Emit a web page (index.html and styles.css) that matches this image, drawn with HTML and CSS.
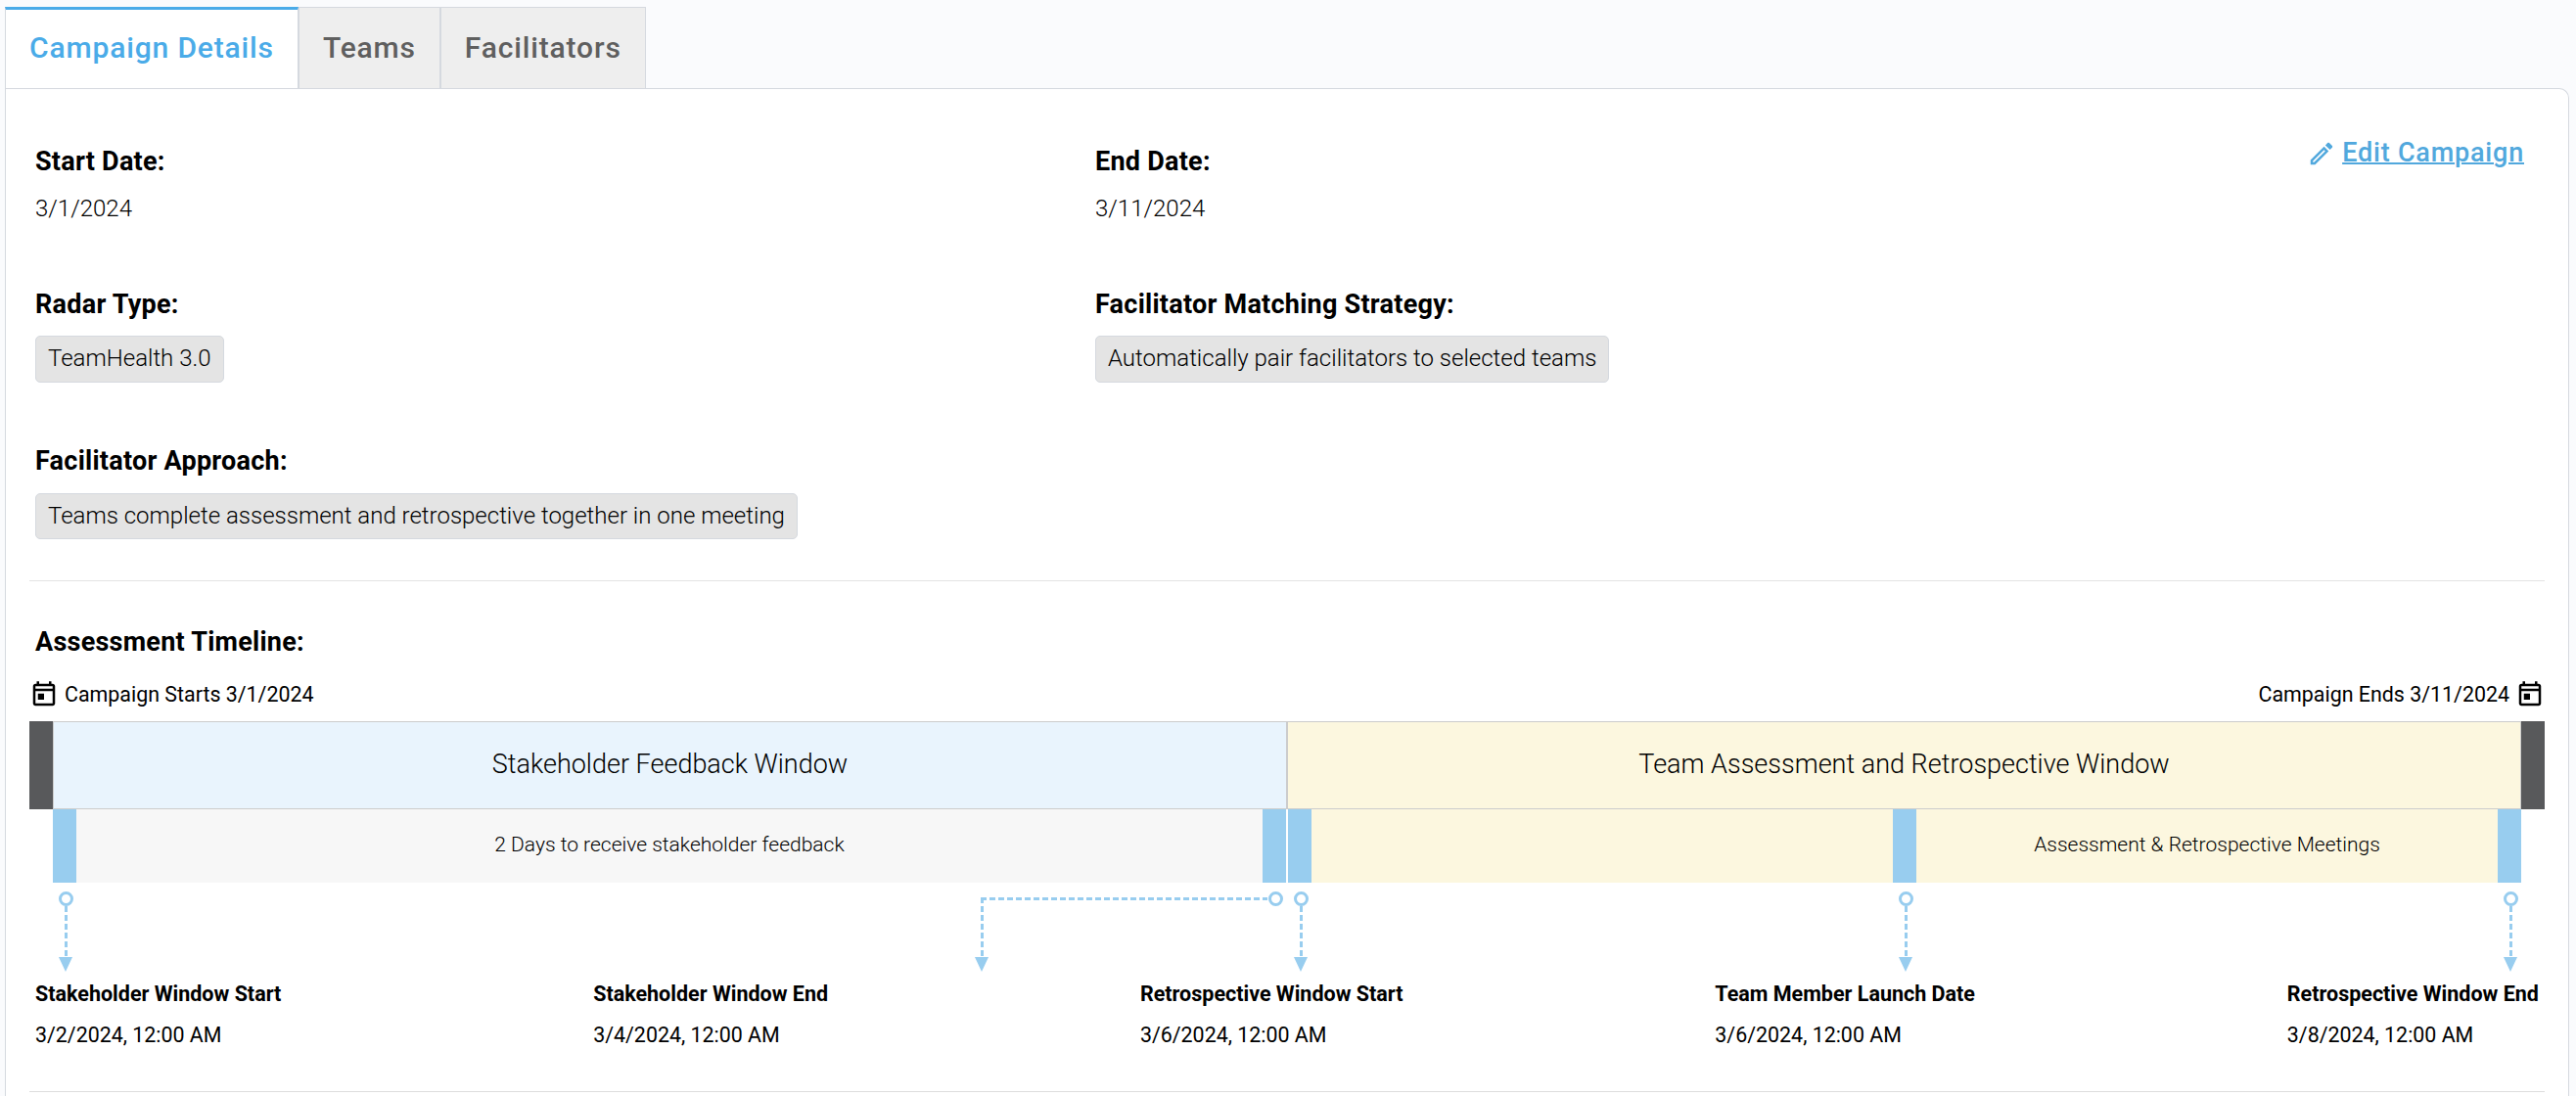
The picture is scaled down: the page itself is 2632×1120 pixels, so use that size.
FILE: index.html
```html
<!DOCTYPE html>
<html lang="en">
<head>
    <meta charset="UTF-8">
    <meta name="viewport" content="width=device-width, initial-scale=1.0">
    <title>Campaign Details</title>
    <link rel="stylesheet" href="styles.css">
</head>
<body>
    <nav class="tabs">
        <a class="tab active">Campaign Details</a>
        <a class="tab">Teams</a>
        <a class="tab">Facilitators</a>
    </nav>
    <main class="panel">
        <section class="details">
            <div class="field">
                <h3>Start Date:</h3>
                <p>3/1/2024</p>
            </div>
            <div class="field">
                <h3>End Date:</h3>
                <p>3/11/2024</p>
            </div>
            <a class="edit-link">
                <svg viewBox="0 0 24 24"><path d="M14.06 9.02l.92.92L5.92 19H5v-.92l9.06-9.06M17.66 3c-.25 0-.51.1-.7.29l-1.83 1.83 3.75 3.75 1.83-1.83c.39-.39.39-1.02 0-1.41l-2.34-2.34c-.2-.2-.45-.29-.71-.29zm-3.6 3.19L3 17.25V21h3.75L17.81 9.94l-3.75-3.75z"/></svg>
                <span>Edit Campaign</span>
            </a>
            <div class="field">
                <h3>Radar Type:</h3>
                <div class="chip">TeamHealth 3.0</div>
            </div>
            <div class="field wide">
                <h3>Facilitator Matching Strategy:</h3>
                <div class="chip">Automatically pair facilitators to selected teams</div>
            </div>
            <div class="field">
                <h3>Facilitator Approach:</h3>
                <div class="chip">Teams complete assessment and retrospective together in one meeting</div>
            </div>
        </section>

        <section class="timeline">
            <h3>Assessment Timeline:</h3>
            <div class="range">
                <div class="range-end">
                    <svg viewBox="0 0 24 24"><path d="M19 3h-1V1h-2v2H8V1H6v2H5c-1.11 0-1.99.9-1.99 2L3 19c0 1.1.89 2 2 2h14c1.1 0 2-.9 2-2V5c0-1.1-.9-2-2-2zm0 16H5V9h14v10zm0-12H5V5h14v2zM7 11h5v5H7z"/></svg>
                    <span>Campaign Starts 3/1/2024</span>
                </div>
                <div class="range-end">
                    <span>Campaign Ends 3/11/2024</span>
                    <svg viewBox="0 0 24 24"><path d="M19 3h-1V1h-2v2H8V1H6v2H5c-1.11 0-1.99.9-1.99 2L3 19c0 1.1.89 2 2 2h14c1.1 0 2-.9 2-2V5c0-1.1-.9-2-2-2zm0 16H5V9h14v10zm0-12H5V5h14v2zM7 11h5v5H7z"/></svg>
                </div>
            </div>
            <div class="windows">
                <div class="cap"></div>
                <div class="window stakeholder">Stakeholder Feedback Window</div>
                <div class="window team">Team Assessment and Retrospective Window</div>
                <div class="cap"></div>
            </div>
            <div class="phases">
                <div class="phase">
                    <i class="mark"></i>
                    <div class="span feedback">2 Days to receive stakeholder feedback</div>
                    <i class="mark"></i>
                </div>
                <div class="phase">
                    <i class="mark"></i>
                    <div class="span retro"></div>
                    <i class="mark"></i>
                    <div class="span retro">Assessment &amp; Retrospective Meetings</div>
                    <i class="mark"></i>
                </div>
            </div>
            <svg class="arrows" viewBox="0 0 2570 91">
                <g class="lines">
                    <path d="M37.5 24V75"/>
                    <path d="M973.5 24V75"/>
                    <path d="M972 16.5H1265"/>
                    <path d="M1299.5 24V75"/>
                    <path d="M1917.5 24V75"/>
                    <path d="M2535.5 24V75"/>
                </g>
                <path class="corner" d="M973.5 15V21"/>
                <g class="dots">
                    <circle cx="37.5" cy="16.5" r="6"/>
                    <circle cx="1273.5" cy="16.5" r="6"/>
                    <circle cx="1299.5" cy="16.5" r="6"/>
                    <circle cx="1917.5" cy="16.5" r="6"/>
                    <circle cx="2535.5" cy="16.5" r="6"/>
                </g>
                <g class="heads">
                    <path d="M30 76H44L37 91Z"/>
                    <path d="M966 76H980L973 91Z"/>
                    <path d="M1292 76H1306L1299 91Z"/>
                    <path d="M1910 76H1924L1917 91Z"/>
                    <path d="M2528 76H2542L2535 91Z"/>
                </g>
            </svg>
            <div class="dates">
                <div><strong>Stakeholder Window Start</strong><span>3/2/2024, 12:00 AM</span></div>
                <div><strong>Stakeholder Window End</strong><span>3/4/2024, 12:00 AM</span></div>
                <div><strong>Retrospective Window Start</strong><span>3/6/2024, 12:00 AM</span></div>
                <div><strong>Team Member Launch Date</strong><span>3/6/2024, 12:00 AM</span></div>
                <div><strong>Retrospective Window End</strong><span>3/8/2024, 12:00 AM</span></div>
            </div>
        </section>
    </main>
</body>
</html>
```
FILE: styles.css
```css
* {
    box-sizing: border-box;
}
body {
    margin: 0;
    padding: 7px 7px 0 5px;
    background: #fafbfd;
    color: #000;
    font-family: Roboto, 'Liberation Sans', sans-serif;
}
h3, p {
    margin: 0;
}
svg {
    display: block;
}

/* tabs */
.tabs {
    display: flex;
    height: 83px;
}
.tab {
    padding: 0 24px;
    line-height: 82px;
    font-size: 30px;
    font-weight: 500;
    letter-spacing: 0.85px;
    color: #5f5f5f;
    background: #eee;
    border: 1px solid #d5d9df;
    border-bottom: none;
}
.tab.active {
    line-height: 78px;
    color: #4aabe8;
    background: #fff;
    border-top: 3px solid #4aabe8;
}

/* panel */
.panel {
    height: 1030px;
    padding: 0 24px;
    background: #fff;
    border: 1px solid #d5d9df;
    border-bottom: none;
    border-radius: 0 10px 0 0;
}
.details {
    display: grid;
    grid-template-columns: 1083px 1fr auto;
    grid-template-rows: 146px 160.2px auto;
    height: 503px;
    padding: 54px 0 0 6px;
    border-bottom: 1px solid #e3e3e3;
}
h3 {
    font-size: 27px;
    line-height: 40px;
    font-weight: 700;
    letter-spacing: 0.25px;
}
.field p {
    margin-top: 8px;
    font-size: 24px;
    line-height: 40px;
    font-weight: 300;
}
.field.wide {
    grid-column: 2 / 4;
}
.chip {
    width: fit-content;
    height: 47.5px;
    margin-top: 12.4px;
    padding: 0 12px;
    line-height: 44px;
    font-size: 24px;
    font-weight: 300;
    background: #e4e4e4;
    border: 1px solid #d5d9df;
    border-radius: 5px;
}
.edit-link {
    display: flex;
    gap: 6px;
    height: 30px;
    margin-right: 21px;
    font-size: 27px;
    line-height: 22px;
    font-weight: 500;
    letter-spacing: 0.8px;
    color: #51a8dd;
}
.edit-link svg {
    width: 30px;
    height: 30px;
    margin-top: -3px;
    fill: #51a8dd;
}
.edit-link span {
    text-decoration: underline;
    text-decoration-thickness: 2px;
}

/* timeline */
.timeline {
    height: 522px;
    padding-top: 42px;
    border-bottom: 1px solid #dedede;
}
.timeline h3 {
    padding-left: 6px;
}
.range {
    display: flex;
    justify-content: space-between;
    height: 61px;
    padding-top: 19px;
}
.range-end {
    display: flex;
    gap: 6px;
    height: 30px;
    line-height: 30px;
    font-size: 21.4px;
}
.range-end svg {
    width: 30px;
    height: 30px;
}
.windows {
    display: grid;
    grid-template-columns: 24px 1261px 1261px 24px;
    height: 90px;
}
.cap {
    background: #58595b;
}
.window {
    border: 1px solid #ccc;
    text-align: center;
    font-size: 27px;
    line-height: 86px;
    font-weight: 300;
}
.stakeholder {
    background: #e9f4fd;
}
.team {
    background: #fcf7df;
}
.phases {
    display: grid;
    grid-template-columns: 1260px 1260px;
    gap: 2px;
    height: 75px;
    padding-left: 24px;
}
.phase {
    display: flex;
}
.mark {
    width: 24px;
    background: #98cdef;
}
.span {
    flex: 1;
    text-align: center;
    font-size: 21px;
    line-height: 72px;
    font-weight: 300;
}
.feedback {
    background: #f7f7f7;
}
.retro {
    background: #fcf7df;
}
.arrows {
    width: 2570px;
    height: 91px;
}
.lines path, .corner {
    fill: none;
    stroke: #98cdef;
    stroke-width: 3;
}
.lines path {
    stroke-dasharray: 6 3;
}
.dots circle {
    fill: #fff;
    stroke: #98cdef;
    stroke-width: 3;
}
.heads path {
    fill: #98cdef;
}
.dates {
    display: flex;
    justify-content: space-between;
    padding: 8px 6px 0;
    font-size: 21.4px;
}
.dates strong, .dates span {
    display: block;
    line-height: 30px;
}
.dates strong {
    font-size: 21.5px;
}
.dates span {
    margin-top: 12px;
}
```
